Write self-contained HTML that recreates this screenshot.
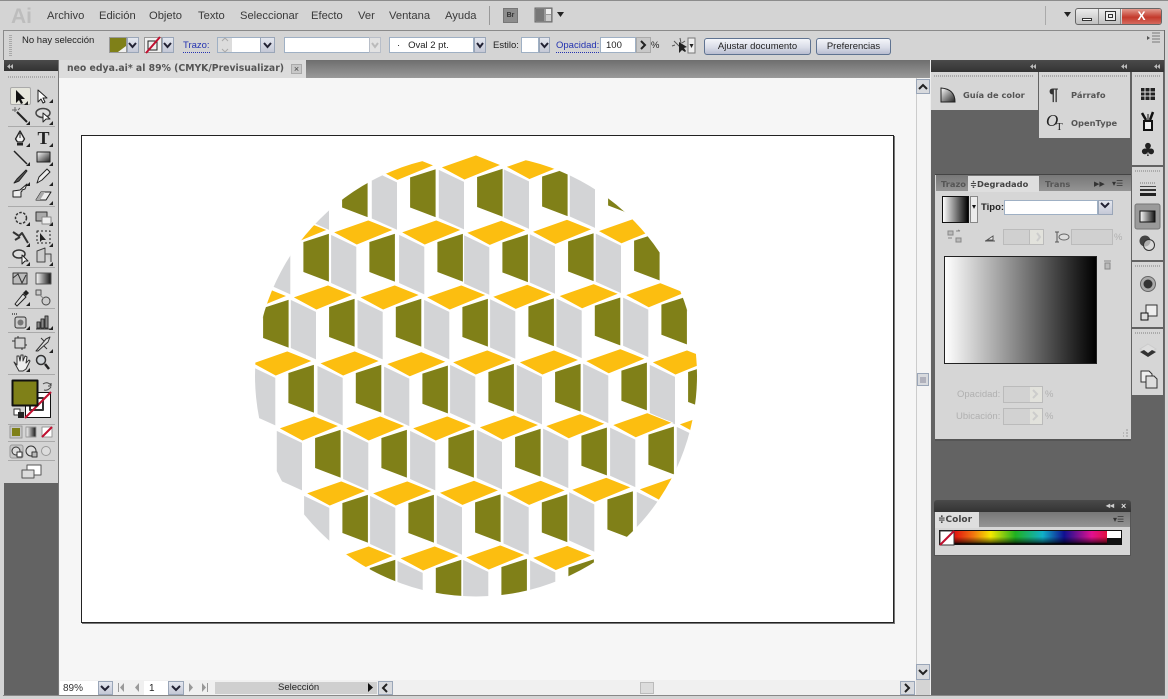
<!DOCTYPE html>
<html><head><meta charset="utf-8"><style>
html,body{margin:0;padding:0}
body{width:1168px;height:699px;overflow:hidden;position:relative;background:#d4d4d4;font-family:"Liberation Sans",sans-serif;font-size:11px;color:#333}
div,span.a{position:absolute;box-sizing:border-box}
.t{position:absolute;white-space:nowrap;line-height:12px}
.m{top:10px;font-size:11.2px;color:#3a3a3a}
.sel{background:#fff;border:1px solid #9fb0c4}
.dd{background:linear-gradient(#e4e7ef,#c4c8d6);border:1px solid #9aa6b8}
.btn{background:linear-gradient(#f4f5fa,#d7dae6 60%,#b9bdd0);border:1px solid #5f7391;border-radius:3px;text-align:center;font-size:9.5px;line-height:15px;color:#222}
.dark{background:linear-gradient(#4a4a4a,#333)}
.p{background:#d6d6d6}
.grip{height:2px;background:repeating-linear-gradient(90deg,#aaa 0 1px,#d6d6d6 1px 2px)}
.pt{font-family:"DejaVu Sans",sans-serif;font-weight:bold;font-size:8.3px;color:#555;position:absolute;white-space:nowrap;line-height:12px}
.sp{height:1px;left:8px;width:47px;background:#aaa}
.vdim{color:#b0b0b0;font-size:9.5px}
</style></head><body>

<!-- window frame -->
<div style="left:0;top:0;width:1168px;height:1px;background:#8c8c8c"></div>
<div style="left:3px;top:30px;width:1161px;height:1px;background:#8a8a8a"></div>
<div style="left:3px;top:30px;width:1px;height:30px;background:#8a8a8a"></div>
<div style="left:1164px;top:30px;width:1px;height:666px;background:#6a6a6a"></div>
<div style="left:3px;top:695px;width:1162px;height:1px;background:#888"></div>

<!-- title bar -->
<span class="t" style="left:11px;top:6px;font-size:21px;line-height:22px;font-weight:bold;color:#bdbdbd">Ai</span>
<span class="t m" style="left:47px">Archivo</span>
<span class="t m" style="left:99px">Edición</span>
<span class="t m" style="left:149px">Objeto</span>
<span class="t m" style="left:198px">Texto</span>
<span class="t m" style="left:240px">Seleccionar</span>
<span class="t m" style="left:311px">Efecto</span>
<span class="t m" style="left:358px">Ver</span>
<span class="t m" style="left:389px">Ventana</span>
<span class="t m" style="left:445px">Ayuda</span>
<div style="left:489px;top:6px;width:1px;height:19px;background:#999"></div>
<div style="left:503px;top:8px;width:15px;height:15px;background:#8d8d8d;border:1px solid #777;color:#333;font-size:7px;line-height:13px;text-align:center;font-weight:bold">Br</div>
<div style="left:1045px;top:6px;width:1px;height:19px;background:#aaa"></div>
<div style="left:1075px;top:8px;width:87px;height:17px;border:1px solid #666;border-radius:3px;background:linear-gradient(#ececec,#bfbfbf)"></div>
<div style="left:1122px;top:9px;width:39px;height:15px;background:linear-gradient(#e39a8e,#c43a2c 55%,#d56a5e);border-radius:0 2px 2px 0;color:#fff;font-weight:bold;font-size:12px;line-height:14px;text-align:center">X</div>
<div style="left:1098px;top:9px;width:1px;height:15px;background:#888"></div>
<div style="left:1120px;top:9px;width:1px;height:15px;background:#888"></div>
<div style="left:1082px;top:18px;width:10px;height:3px;border:1px solid #333;background:#fff"></div>
<div style="left:1105px;top:11px;width:11px;height:10px;border:1px solid #333;background:#eee"></div>
<div style="left:1108px;top:14px;width:5px;height:4px;border:1px solid #333"></div>

<!-- control bar -->
<div style="left:9px;top:35px;width:3px;height:21px;background:repeating-linear-gradient(#a8a8a8 0 1px,#d4d4d4 1px 2px)"></div>
<span class="t" style="left:22px;top:35px;font-size:9.5px;color:#222">No hay selección</span>
<div style="left:109px;top:37px;width:18px;height:16px;background:#f0f0f0;border:1px solid #999"></div>
<div class="dd" style="left:127px;top:37px;width:12px;height:16px"></div>
<div style="left:144px;top:37px;width:18px;height:16px;background:#f0f0f0;border:1px solid #999"></div>
<div class="dd" style="left:162px;top:37px;width:12px;height:16px"></div>
<span class="t" style="left:183px;top:40px;font-size:9.5px;color:#2433b0;border-bottom:1px dotted #2433b0">Trazo:</span>
<div class="sel" style="left:217px;top:37px;width:44px;height:16px;background:linear-gradient(90deg,#dcdcdc 0 14px,#fff 14px)"></div>
<div class="dd" style="left:260px;top:37px;width:15px;height:16px"></div>
<div class="sel" style="left:284px;top:37px;width:86px;height:16px"></div>
<div style="left:369px;top:37px;width:12px;height:16px;background:#e2e2e2;border:1px solid #b8bec8"></div>
<div class="sel" style="left:389px;top:37px;width:85px;height:16px"></div>
<div class="dd" style="left:474px;top:37px;width:12px;height:16px"></div>
<span class="t" style="left:397px;top:40px;font-size:9.5px;color:#222">·&nbsp;&nbsp; Oval 2 pt.</span>
<span class="t" style="left:493px;top:40px;font-size:9.5px;color:#222">Estilo:</span>
<div class="sel" style="left:521px;top:37px;width:18px;height:16px"></div>
<div class="dd" style="left:539px;top:37px;width:11px;height:16px"></div>
<span class="t" style="left:556px;top:40px;font-size:9.5px;color:#2433b0;border-bottom:1px dotted #2433b0">Opacidad:</span>
<div class="sel" style="left:600px;top:37px;width:36px;height:16px;font-size:9.5px;line-height:15px;padding-left:5px;color:#222">100</div>
<div style="left:636px;top:37px;width:15px;height:16px;background:#c8c8c8;border:1px solid #aaa"></div>
<span class="t" style="left:651px;top:40px;font-size:9.5px;color:#222">%</span>
<div class="btn" style="left:704px;top:38px;width:107px;height:17px">Ajustar documento</div>
<div class="btn" style="left:816px;top:38px;width:75px;height:17px">Preferencias</div>

<!-- left -->
<div class="dark" style="left:4px;top:60px;width:55px;height:11px"></div>
<div class="p" style="left:5px;top:71px;width:53px;height:412px;background:#d4d4d4"></div>
<div style="left:4px;top:483px;width:55px;height:212px;background:#636363"></div>
<div style="left:58px;top:60px;width:1px;height:635px;background:#777"></div>
<div class="grip" style="left:8px;top:76px;width:47px"></div>
<div class="sp" style="top:126px"></div><div class="sp" style="top:206px"></div><div class="sp" style="top:267px"></div><div class="sp" style="top:308px"></div><div class="sp" style="top:332px"></div><div class="sp" style="top:374px"></div><div class="sp" style="top:424px"></div><div class="sp" style="top:441px"></div><div class="sp" style="top:460px"></div>
<div style="left:10px;top:87px;width:21px;height:18px;background:#e6e6dc;border:1px solid #aaa;border-radius:2px"></div>

<!-- doc tabs -->
<div style="left:59px;top:60px;width:871px;height:18px;background:linear-gradient(#6e6e6e,#9a9a9a)"></div>
<div style="left:59px;top:60px;width:247px;height:18px;background:#dcdcdc"></div>
<span class="t" style="left:67px;top:63px;font-family:'DejaVu Sans',sans-serif;font-weight:bold;font-size:9.3px;color:#555">neo edya.ai* al 89% (CMYK/Previsualizar)</span>
<div style="left:291px;top:64px;width:11px;height:10px;background:#c8c8c8;border:1px solid #aaa;color:#444;font-size:9px;line-height:8px;text-align:center">×</div>

<!-- canvas -->
<div style="left:59px;top:78px;width:857px;height:602px;background:#f6f6f6"></div>
<div style="left:81px;top:135px;width:813px;height:488px;background:#fff;border:1px solid #222;box-shadow:1px 1px 0 #777"></div>

<!-- v scrollbar -->
<div style="left:916px;top:78px;width:14px;height:602px;background:#f4f4f4;border-left:1px solid #ccc"></div>
<div class="dd" style="left:916px;top:79px;width:14px;height:15px;background:#d8dade"></div>
<div class="dd" style="left:916px;top:664px;width:14px;height:16px;background:#d8dade"></div>
<div class="dd" style="left:917px;top:373px;width:12px;height:13px;background:#d8dade"></div>

<!-- status bar -->
<div style="left:59px;top:680px;width:857px;height:15px;background:#f0f0f0"></div>
<div style="left:60px;top:681px;width:38px;height:14px;background:#fff"></div>
<span class="t" style="left:63px;top:683px;font-size:10px;color:#333">89%</span>
<div class="dd" style="left:98px;top:681px;width:15px;height:14px"></div>
<div style="left:144px;top:681px;width:24px;height:14px;background:#fff"></div>
<span class="t" style="left:149px;top:683px;font-size:10px;color:#222">1</span>
<div class="dd" style="left:168px;top:681px;width:16px;height:14px"></div>
<div style="left:215px;top:682px;width:162px;height:12px;background:#cfcfcf"></div>
<span class="t" style="left:278px;top:682px;font-size:9.5px;color:#222">Selección</span>
<div class="dd" style="left:378px;top:681px;width:15px;height:14px;background:#d8dade"></div>
<div class="dd" style="left:900px;top:681px;width:15px;height:14px;background:#d8dade"></div>
<div style="left:640px;top:682px;width:14px;height:12px;background:#dcdcdc;border:1px solid #bbb"></div>

<!-- right dock -->
<div style="left:930px;top:60px;width:234px;height:635px;background:#636363;border-left:1px solid #eee"></div>
<div class="dark" style="left:931px;top:60px;width:233px;height:12px"></div>
<div class="p" style="left:931px;top:72px;width:107px;height:38px"></div>
<div class="p" style="left:1039px;top:72px;width:91px;height:66px"></div>
<div class="p" style="left:1132px;top:72px;width:31px;height:93px"></div>
<div class="p" style="left:1132px;top:167px;width:31px;height:93px"></div>
<div class="p" style="left:1132px;top:262px;width:31px;height:65px"></div>
<div class="p" style="left:1132px;top:329px;width:31px;height:66px"></div>
<div class="grip" style="left:934px;top:75px;width:100px"></div>
<div class="grip" style="left:1042px;top:75px;width:85px"></div>
<div class="grip" style="left:1135px;top:75px;width:25px"></div>
<div class="grip" style="left:1135px;top:170px;width:25px"></div>
<div class="grip" style="left:1135px;top:265px;width:25px"></div>
<div class="grip" style="left:1135px;top:332px;width:25px"></div>
<span class="pt" style="left:963px;top:89px">Guía de color</span>
<span class="pt" style="left:1071px;top:89px">Párrafo</span>
<span class="pt" style="left:1071px;top:117px">OpenType</span>
<span class="t" style="left:1049px;top:87px;font-size:17px;line-height:15px;font-weight:bold;color:#333">¶</span>
<span class="t" style="left:1046px;top:113px;font-family:'Liberation Serif',serif;font-style:italic;font-size:17px;line-height:16px;color:#222">O</span>
<span class="t" style="left:1056px;top:121px;font-family:'Liberation Serif',serif;font-size:11px;color:#222">T</span>

<!-- degradado -->
<div style="left:935px;top:174px;width:196px;height:267px;background:#d6d6d6;border-bottom:2px solid #555;border-top:1px solid #444"></div>
<div style="left:936px;top:175px;width:195px;height:16px;background:linear-gradient(#777,#949494)"></div>
<div style="left:968px;top:176px;width:71px;height:16px;background:#dedede"></div>
<span class="pt" style="left:941px;top:178px;color:#555;width:27px;overflow:hidden">Trazo</span>
<span class="pt" style="left:970px;top:178px;color:#444">≑Degradado</span>
<span class="pt" style="left:1045px;top:178px;color:#555;width:27px;overflow:hidden">Trans</span>
<span class="pt" style="left:1094px;top:178px;color:#333;font-size:7px">▶▶</span>
<span class="pt" style="left:1112px;top:178px;color:#333;font-size:8px">▾☰</span>
<div style="left:942px;top:196px;width:27px;height:27px;background:linear-gradient(90deg,#fff,#000);border:1px solid #111"></div>
<div style="left:970px;top:196px;width:8px;height:27px;background:#ececec;border:1px solid #888;color:#222;font-size:7px;line-height:22px;text-align:center">▾</div>
<span class="t" style="left:981px;top:202px;font-size:9.5px;color:#222;font-weight:bold">Tipo:</span>
<div class="sel" style="left:1004px;top:200px;width:94px;height:15px"></div>
<div class="dd" style="left:1098px;top:200px;width:15px;height:15px"></div>
<div style="left:1003px;top:229px;width:32px;height:16px;background:#d0d0d0;border:1px solid #bbb"></div>
<div style="left:1029px;top:229px;width:15px;height:16px;background:#e2e2dc;border:1px solid #bbb"></div>
<div style="left:1071px;top:229px;width:42px;height:16px;background:#d0d0d0;border:1px solid #bbb"></div>
<span class="t vdim" style="left:1114px;top:232px">%</span>
<div style="left:944px;top:256px;width:153px;height:108px;background:linear-gradient(90deg,#fff,#000);border:1px solid #222"></div>
<span class="t vdim" style="left:957px;top:389px">Opacidad:</span>
<span class="t vdim" style="left:956px;top:411px">Ubicación:</span>
<div style="left:1003px;top:386px;width:40px;height:17px;background:linear-gradient(90deg,#d2d2d2 0 26px,#e2e2dc 26px);border:1px solid #bbb"></div>
<div style="left:1003px;top:408px;width:40px;height:17px;background:linear-gradient(90deg,#d2d2d2 0 26px,#e2e2dc 26px);border:1px solid #bbb"></div>
<span class="t vdim" style="left:1045px;top:389px">%</span>
<span class="t vdim" style="left:1045px;top:411px">%</span>

<!-- color -->
<div class="dark" style="left:934px;top:500px;width:197px;height:12px;border-radius:3px 3px 0 0"></div>
<div style="left:934px;top:512px;width:197px;height:44px;background:#d6d6d6;border:1px solid #555;border-top:0"></div>
<div style="left:935px;top:512px;width:195px;height:15px;background:linear-gradient(#777,#949494)"></div>
<div style="left:935px;top:512px;width:44px;height:16px;background:#dedede"></div>
<span class="pt" style="left:938px;top:514px;color:#444;font-size:9px">≑Color</span>
<span class="pt" style="left:1113px;top:514px;color:#333;font-size:8px">▾☰</span>
<span class="t" style="left:1106px;top:500px;color:#ccc;font-size:8px;font-weight:bold">◂◂</span>
<span class="t" style="left:1121px;top:500px;color:#ddd;font-size:9px;font-weight:bold">×</span>
<div style="left:939px;top:530px;width:183px;height:15px;background:#111"></div>
<div style="left:954px;top:531px;width:153px;height:13px;background:linear-gradient(#0000 0,#0000 45%,#0008 85%,#000),linear-gradient(90deg,#e01010,#f07010 12%,#f4e800 24%,#20b020 40%,#10b0c8 58%,#101090 72%,#e01090 90%,#e01040)"></div>
<div style="left:1107px;top:531px;width:14px;height:7px;background:#fff"></div>

<!-- main SVG: artwork and icons -->
<svg width="1168" height="699" viewBox="0 0 1168 699" style="position:absolute;left:0;top:0">
<defs>
<clipPath id="k"><circle cx="476" cy="375.5" r="221"/></clipPath>
<linearGradient id="gg" x1="0" y1="0" x2="1" y2="1"><stop offset="0" stop-color="#fff"/><stop offset="1" stop-color="#222"/></linearGradient>
<linearGradient id="gh" x1="0" y1="0" x2="1" y2="0"><stop offset="0" stop-color="#fff"/><stop offset="1" stop-color="#111"/></linearGradient>
<g id="c" stroke="#fff" stroke-width=".8">
<polygon fill="#d3d4d6" points="-37.6,14.3 -11.6,26.7 -11.6,75 -37.6,63.3"/>
<polygon fill="#808018" points=".7,21.7 27,13.3 27,62.3 .7,52.3"/>
<polygon fill="#fcbe10" points="-35,12.3 0,0 25,10 -11.6,25"/>
</g>
</defs>
<g clip-path="url(#k)">
<use href="#c" x="341" y="155.5"/><use href="#c" x="409" y="155.4"/><use href="#c" x="476" y="155"/><use href="#c" x="541" y="154.5"/><use href="#c" x="607" y="153.5"/>
<use href="#c" x="302.3" y="220"/><use href="#c" x="368.3" y="220"/><use href="#c" x="436.3" y="220"/><use href="#c" x="501.3" y="220.4"/><use href="#c" x="567" y="219.4"/><use href="#c" x="633" y="218.7"/>
<use href="#c" x="262" y="286"/><use href="#c" x="328" y="285"/><use href="#c" x="394.7" y="285"/><use href="#c" x="461.3" y="285"/><use href="#c" x="527.3" y="284.4"/><use href="#c" x="593.7" y="283.7"/><use href="#c" x="660.3" y="282.7"/>
<use href="#c" x="287.3" y="351"/><use href="#c" x="354.7" y="351"/><use href="#c" x="421.3" y="351.7"/><use href="#c" x="487.3" y="350"/><use href="#c" x="554" y="350"/><use href="#c" x="620.3" y="348.7"/><use href="#c" x="687" y="350"/>
<use href="#c" x="314" y="416"/><use href="#c" x="380.3" y="416"/><use href="#c" x="447.3" y="416"/><use href="#c" x="514" y="415"/><use href="#c" x="580.3" y="413.7"/><use href="#c" x="647.3" y="412.7"/><use href="#c" x="714" y="412"/>
<use href="#c" x="341.3" y="481"/><use href="#c" x="407.3" y="481"/><use href="#c" x="474" y="480.4"/><use href="#c" x="540.7" y="480.4"/><use href="#c" x="606.3" y="477.4"/><use href="#c" x="674" y="477"/>
<use href="#c" x="368.7" y="546"/><use href="#c" x="434.7" y="546"/><use href="#c" x="500.3" y="545"/><use href="#c" x="567.3" y="545.5"/>
</g>

<!-- top bar icons -->
<g>
<rect x="535" y="8" width="17" height="14" fill="#9a9a9a" stroke="#666"/><rect x="536" y="9" width="8" height="12" fill="#777"/><rect x="546" y="9" width="5" height="5" fill="#eee"/><rect x="546" y="15" width="5" height="6" fill="#ccc"/>
<polygon points="557,12 564,12 560.5,17" fill="#222"/><polygon points="1064,12 1071,12 1067.5,17" fill="#222"/>
<polygon points="110,38 126,38 126,46 118,52 110,52" fill="#7f8018"/>
<path d="M129 43l3.500 4 3.500-4" fill="none" stroke="#223" stroke-width="2"/><path d="M164 43l3.500 4 3.500-4" fill="none" stroke="#223" stroke-width="2"/><path d="M264 43l3.500 4 3.500-4" fill="none" stroke="#223" stroke-width="2"/><path d="M372 43l3 4 3-4" fill="none" stroke="#bbb" stroke-width="2"/><path d="M477 43l3 4 3-4" fill="none" stroke="#223" stroke-width="2"/><path d="M541 43l3.500 4 3.500-4" fill="none" stroke="#223" stroke-width="2"/>
<rect x="148" y="41" width="9" height="9" fill="none" stroke="#222"/><path d="M146 53L160 37" stroke="#c01030" stroke-width="2"/>
<path d="M641 41l4 4-4 4" fill="none" stroke="#222" stroke-width="2"/>
<path d="M222 41l3-3 3 3M222 49l3 3 3-3" fill="none" stroke="#aaa"/>
<!-- wand -->
<path d="M674 41l8 8M680 38l1 5M685 41l-3 2M672 46l3-1" stroke="#555" fill="none"/><polygon points="679,42 679,53 682,50 685,52 686,51 684,48 687,47" fill="#222"/>
<rect x="688" y="38" width="7" height="15" fill="#eee" stroke="#777"/><polygon points="689.500,44 693.500,44 691.500,48" fill="#222"/>
<!-- panel menu icon -->
<path d="M1152 33h8M1152 36h8M1152 39h8M1152 42h8" stroke="#777"/><polygon points="1147,36 1150,38 1147,40" fill="#555"/>
<!-- collapse arrows -->
<g fill="#bbb"><path d="M13 64l-3 2.500 3 2.500zM10 64l-3 2.500 3 2.500z"/><path d="M1036 64l-3 2.500 3 2.500zM1033 64l-3 2.500 3 2.500z"/><path d="M1127 64l-3 2.500 3 2.500zM1124 64l-3 2.500 3 2.500z"/><path d="M1160 64l-3 2.500 3 2.500zM1157 64l-3 2.500 3 2.500z"/></g>
<!-- scroll arrows -->
<path d="M919 89l4-4 4 4" fill="none" stroke="#222" stroke-width="2"/><path d="M919 670l4 4 4-4" fill="none" stroke="#222" stroke-width="2"/>
<path d="M920 378h6M920 380h6M920 382h6" stroke="#889"/>
<path d="M101 686l4 4 4-4" fill="none" stroke="#223" stroke-width="2"/><path d="M172 686l4 4 4-4" fill="none" stroke="#223" stroke-width="2"/>
<path d="M387 684l-4 4 4 4" fill="none" stroke="#222" stroke-width="2"/><path d="M905 684l4 4-4 4" fill="none" stroke="#222" stroke-width="2"/>
<polygon points="368,683 368,692 373,687.500" fill="#111"/>
<g fill="#999"><path d="M118 683v9h1v-9zM124 683l-4 4.500 4 4.500z"/><path d="M139 683l-4 4.500 4 4.500z"/><path d="M189 683l4 4.500-4 4.500z"/><path d="M202 683l4 4.500-4 4.500zM207 683v9h1v-9z"/></g>
</g>

<!-- tools -->
<g stroke-linejoin="round">
<polygon points="16,90 16,103 19,100 21,104 23,103 21,99 25,99" fill="#111"/>
<polygon points="38,90 38,102 41,99 43,103 45,102 43,98 47,98" fill="#fff" stroke="#222"/>
<path d="M17 112l10 10" stroke="#222" stroke-width="2"/><path d="M15 107v5M12 110h5M20 108l-2 2" stroke="#666"/>
<ellipse cx="43" cy="113" rx="7" ry="4.500" fill="#ddd" stroke="#444" stroke-width="1.500"/><polygon points="43,113 43,122 46,119 50,119" fill="#fff" stroke="#222"/>
<path d="M20 131l4.500 8-2 3h-5l-2-3z" fill="#f2f2f2" stroke="#222" stroke-width="1.300"/><rect x="17" y="143" width="6" height="2.500" fill="#222"/><path d="M20 133v5" stroke="#222"/>
<text x="43.500" y="144" text-anchor="middle" font-family="Liberation Serif" font-weight="bold" font-size="18" fill="#222">T</text>
<line x1="14" y1="151" x2="27" y2="164" stroke="#222" stroke-width="1.500"/>
<rect x="37" y="152" width="13" height="10" fill="url(#gg)" stroke="#222"/>
<path d="M14 183l3-4 9-9 1 1-8 10z" fill="#555" stroke="#222"/>
<path d="M37 183l2-6 8-8 3 3-8 8z" fill="#eee" stroke="#222"/>
<path d="M13 191l7-1 7-6-2 5-3 1v1l-1 1v5H13z" fill="#eee" stroke="#222"/>
<path d="M36 200l5-8h10l-5 8z" fill="#eee" stroke="#222"/><path d="M36 200l5-8h4l-5 8z" fill="#aaa"/>
<circle cx="21" cy="218" r="5.500" fill="none" stroke="#333" stroke-width="1.500" stroke-dasharray="2.500 1.500"/>
<rect x="36" y="212" width="11" height="9" fill="#aaa" stroke="#333"/><rect x="42" y="217" width="9" height="7" fill="#eee" stroke="#888"/>
<path d="M13 232l6 4 3-3 6 10M15 240l5-3" fill="none" stroke="#333" stroke-width="2"/>
<rect x="37" y="231" width="13" height="12" fill="none" stroke="#222" stroke-dasharray="2 2"/><polygon points="40,233 40,242 42,240 46,240" fill="#222"/>
<ellipse cx="19" cy="254" rx="6" ry="4" fill="#ddd" stroke="#333" stroke-width="1.500"/><polygon points="22,255 22,264 25,261 28,261" fill="#fff" stroke="#222"/>
<path d="M37 251l8-3v14h-8zM45 254h6v8" fill="#ccc" stroke="#444"/>
<rect x="13" y="273" width="14" height="11" fill="#bbb" stroke="#333"/><path d="M13 278l5-4 4 9 4-8" fill="none" stroke="#333"/>
<rect x="36" y="273" width="15" height="11" fill="url(#gh)" stroke="#555"/>
<path d="M15 304l8-10 3 3-9 9z" fill="#ddd" stroke="#222"/><path d="M23 293l3-3 3 3-3 3z" fill="#222"/>
<rect x="36" y="290" width="5" height="5" fill="#ccc" stroke="#555"/><circle cx="46" cy="301" r="4" fill="#ccc" stroke="#444"/><path d="M40 295l4 4" stroke="#888"/>
<rect x="15" y="317" width="11" height="11" rx="2" fill="#ccc" stroke="#333"/><circle cx="20.500" cy="322.500" r="3" fill="#777"/><path d="M12 314h5" stroke="#666" stroke-width="2" stroke-dasharray="1 1"/>
<path d="M37 328v-6h3v6zM41 328v-9h3v9zM45 328v-12h3v12zM36 329h14" fill="#888" stroke="#333"/>
<rect x="15" y="338" width="10" height="10" fill="none" stroke="#333"/><path d="M18 336v2M12 341h3M25 345h2M22 348v2" stroke="#333"/>
<path d="M36 351l10-12 4-2-2 5-10 9zM41 338l3 3M44 346l3 3" fill="#ddd" stroke="#333"/>
<path d="M14 362l3 3v-9l2 0 1 5 1-6 2 0 0 6 2-5 2 1-1 6 3-3 1 1-4 8-3 2h-4z" fill="#eee" stroke="#333"/>
<circle cx="41" cy="360" r="4.500" fill="#cfd4d8" stroke="#333" stroke-width="1.500"/><line x1="45" y1="364" x2="49" y2="369" stroke="#222" stroke-width="2.500"/>
<g fill="#222"><polygon points="28,101 28,105 24,105"/><polygon points="53,99 53,103 49,103"/><polygon points="30,121 30,125 26,125"/><polygon points="53,121 53,125 49,125"/><polygon points="30,143 30,147 26,147"/><polygon points="53,143 53,147 49,147"/><polygon points="30,162 30,166 26,166"/><polygon points="53,162 53,166 49,166"/><polygon points="30,182 30,186 26,186"/><polygon points="53,182 53,186 49,186"/><polygon points="53,201 53,205 49,205"/><polygon points="30,222 30,226 26,226"/><polygon points="53,222 53,226 49,226"/><polygon points="30,243 30,247 26,247"/><polygon points="53,243 53,247 49,247"/><polygon points="30,262 30,266 26,266"/><polygon points="53,262 53,266 49,266"/><polygon points="30,302 30,306 26,306"/><polygon points="30,326 30,330 26,330"/><polygon points="53,326 53,330 49,330"/><polygon points="53,349 53,353 49,353"/><polygon points="30,368 30,372 26,372"/></g>
<!-- colour boxes -->
<rect x="25.500" y="392.500" width="25" height="25" fill="#fff" stroke="#111"/>
<rect x="30" y="398" width="13" height="12" fill="none" stroke="#333" stroke-width="2"/>
<line x1="25" y1="418" x2="51" y2="392" stroke="#c01030" stroke-width="2"/>
<rect x="12.500" y="380.500" width="25" height="25" fill="#7f8018" stroke="#111" stroke-width="2"/>
<path d="M43 384q4-3 8 1M51 383v3h-3M44 390q4 1 7-3" fill="none" stroke="#444"/>
<rect x="14" y="409" width="6" height="6" fill="#fff" stroke="#333"/><rect x="18" y="412" width="6" height="6" fill="#222"/>
<rect x="10" y="426" width="12" height="12" fill="#c6c6c6" stroke="#999"/><rect x="12" y="428" width="8" height="8" fill="#7f8018"/>
<rect x="26" y="427" width="10" height="10" fill="url(#gh)" stroke="#999"/>
<rect x="42" y="427" width="10" height="10" fill="#fff" stroke="#999"/><line x1="42" y1="437" x2="52" y2="427" stroke="#c01030" stroke-width="2"/>
<rect x="10" y="445" width="13" height="13" rx="2" fill="#c6c6c6" stroke="#999"/><circle cx="16" cy="451" r="4" fill="#ddd" stroke="#333"/><rect x="17" y="452" width="5" height="5" fill="#fff" stroke="#333"/>
<circle cx="31" cy="451" r="5" fill="#ddd" stroke="#333"/><rect x="32" y="452" width="5" height="5" fill="#bbb" stroke="#333"/>
<circle cx="46" cy="451" r="4.500" fill="#ddd" stroke="#999"/>
<rect x="27" y="465" width="14" height="10" fill="#fff" stroke="#555"/><rect x="22" y="470" width="12" height="8" fill="#ddd" stroke="#555"/>
</g>

<!-- dock icons -->
<g>
<path d="M941 102V88q14 1 14 14z" fill="url(#gg)" stroke="#222"/>
<g fill="#222"><rect x="1141" y="88" width="14" height="12"/></g><path d="M1141 92h14M1141 96h14M1145 88v12M1150 88v12" stroke="#ddd"/>
<rect x="1144" y="121" width="8" height="9" fill="#eee" stroke="#111" stroke-width="2"/><path d="M1146 120l-4-7M1150 120l3-8" stroke="#111" stroke-width="2.500"/><path d="M1148 121v-7" stroke="#111"/>
<text x="1148" y="156" text-anchor="middle" font-size="18" font-family="DejaVu Sans" fill="#222">♣</text>
<path d="M1140 183h16" stroke="#777" stroke-dasharray="1 1"/><rect x="1140" y="186" width="16" height="1" fill="#444"/><rect x="1140" y="189" width="16" height="2" fill="#333"/><rect x="1140" y="193" width="16" height="3" fill="#222"/>
<rect x="1135" y="204" width="25" height="25" rx="2" fill="#9a9a9a" stroke="#777"/><rect x="1140" y="211" width="15" height="11" fill="url(#gh)" stroke="#111"/>
<circle cx="1145" cy="241" r="5.500" fill="#444"/><circle cx="1149" cy="245" r="5.500" fill="#ddd" fill-opacity=".7" stroke="#333"/>
<circle cx="1148" cy="284" r="7.500" fill="#aaa" stroke="#666"/><circle cx="1148" cy="284" r="4.500" fill="#333"/>
<rect x="1146" y="305" width="11" height="11" fill="#eee" stroke="#333"/><rect x="1141" y="313" width="7" height="7" fill="#ddd" stroke="#111"/>
<path d="M1148 344l8 5-8 5-8-5z" fill="#ddd" stroke="#ccc"/><path d="M1140 352l8 5 8-5-4-2-4 3-4-3z" fill="#333"/>
<path d="M1141 371h8l3 3v8h-11z" fill="#eee" stroke="#333"/><path d="M1146 376h8l3 3v9h-11z" fill="#ddd" stroke="#333"/>
<!-- degradado small -->
<path d="M948 231h5v4h-5zM956 231h4M960 231l-2-1M948 238h4M956 238h5v4h-5z" fill="#bbb" stroke="#888"/>
<path d="M987 240l6-4v4zM985 241h10" fill="#eee" stroke="#555"/>
<path d="M1057 232v10M1055 232h4M1055 242h4" stroke="#555" fill="none"/><ellipse cx="1064" cy="237" rx="5" ry="3" fill="#ddd" stroke="#666"/>
<path d="M1037 233l3 4-3 4" fill="none" stroke="#ccc" stroke-width="2"/><path d="M1033 390l4 4-4 4" fill="none" stroke="#ccc" stroke-width="2"/><path d="M1033 412l4 4-4 4" fill="none" stroke="#ccc" stroke-width="2"/>
<path d="M1104 261h7M1105 263h5v6h-5z" fill="#bbb" stroke="#888"/>
<path d="M1101 203l4 4 4-4" fill="none" stroke="#223" stroke-width="2"/>
<path d="M1126 436h2M1123 436h1M1126 433h2M1123 433h1M1126 430h2" stroke="#999"/>
<polygon points="972,205 976,205 974,208" fill="#111"/>
<rect x="940" y="531" width="14" height="14" fill="#fff" stroke="#333"/>
<line x1="940" y1="545" x2="954" y2="531" stroke="#c01030" stroke-width="2"/>
</g>
</svg>
</body></html>
